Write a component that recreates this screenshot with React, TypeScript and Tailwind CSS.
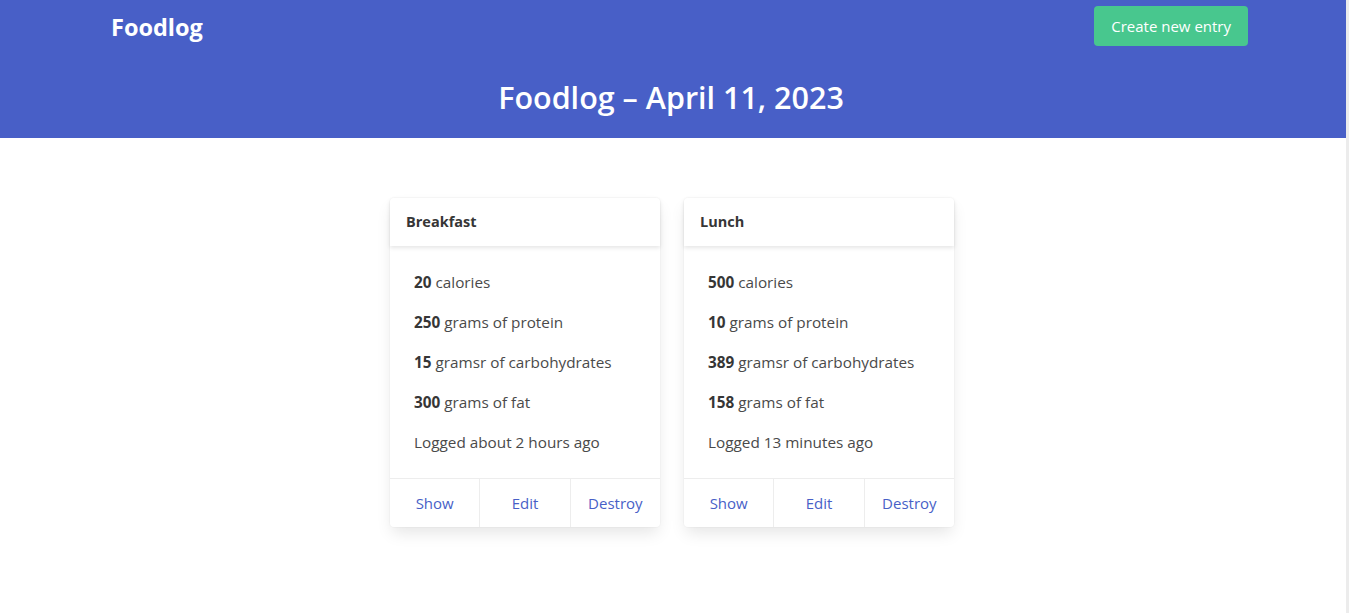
import React from "react";

type Entry = {
  meal: string;
  calories: number;
  protein: number;
  carbs: number;
  fat: number;
  logged: string;
};

const ENTRIES: Entry[] = [
  { meal: "Breakfast", calories: 20, protein: 250, carbs: 15, fat: 300, logged: "Logged about 2 hours ago" },
  { meal: "Lunch", calories: 500, protein: 10, carbs: 389, fat: 158, logged: "Logged 13 minutes ago" },
];

const FONT = { fontFamily: '"Open Sans", "Noto Sans", sans-serif' };

function EntryCard({ entry }: { entry: Entry }) {
  return (
    <div className="w-[270px] rounded bg-white shadow-[0_8px_16px_-2px_rgba(10,10,10,0.1),0_0_0_1px_rgba(10,10,10,0.02)]">
      <div className="px-4 py-3 shadow-[0_2px_4px_rgba(10,10,10,0.1)] rounded-t">
        <p className="text-[14.5px] leading-6 font-bold text-[#363636]">{entry.meal}</p>
      </div>
      <div className="p-6 flex flex-col gap-4 text-[15.3px] leading-6 text-[#4a4a4a]">
        <p><b className="text-[#363636] font-bold">{entry.calories}</b> calories</p>
        <p><b className="text-[#363636] font-bold">{entry.protein}</b> grams of protein</p>
        <p><b className="text-[#363636] font-bold">{entry.carbs}</b> gramsr of carbohydrates</p>
        <p><b className="text-[#363636] font-bold">{entry.fat}</b> grams of fat</p>
        <p>{entry.logged}</p>
      </div>
      <div className="flex border-t border-[#ededed] text-[15px] leading-6 text-[#485fc7]">
        {["Show", "Edit", "Destroy"].map((label, i) => (
          <a
            key={label}
            className={`flex-1 py-3 text-center ${i < 2 ? "border-r border-[#ededed]" : ""}`}
          >
            {label}
          </a>
        ))}
      </div>
    </div>
  );
}

export default function App() {
  return (
    <div className="min-h-[613px] bg-white flex" style={FONT}>
      <div className="flex-1">
        <header className="bg-[#485fc7] text-white">
          <div className="pr-[2px]">
            <nav className="h-[52px] w-[1152px] mx-auto flex items-center justify-between">
              <span className="pl-[15px] pt-[4px] text-[23.5px] font-bold">Foodlog</span>
              <button className="h-10 px-[17px] rounded bg-[#48c78e] text-[15px] text-white">
                Create new entry
              </button>
            </nav>
          </div>
          <h1 className="pt-[27px] pb-[23px] pr-[4px] text-center text-[30.5px] leading-9 font-semibold">
            Foodlog – April 11, 2023
          </h1>
        </header>
        <main className="pt-[60px] pr-[2px] flex justify-center gap-6">
          {ENTRIES.map((e) => (
            <EntryCard key={e.meal} entry={e} />
          ))}
        </main>
      </div>
      <div className="w-[3px] bg-[#ececec]" />
    </div>
  );
}
